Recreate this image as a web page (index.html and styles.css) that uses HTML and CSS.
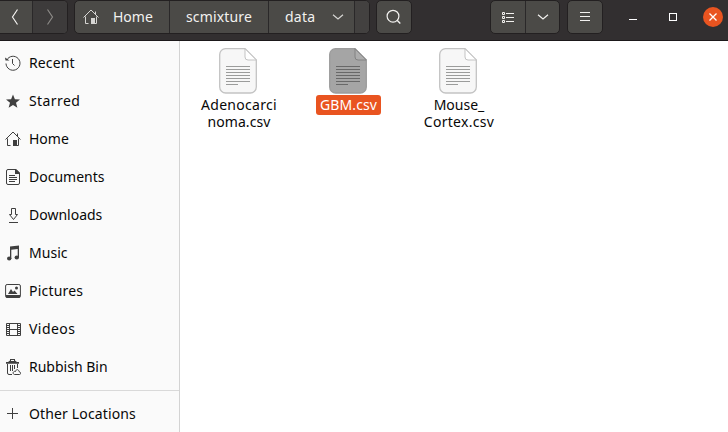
FILE: index.html
```
<!DOCTYPE html>
<html lang="en">
<head>
<meta charset="utf-8">
<title>data</title>
<link rel="stylesheet" href="styles.css">
</head>
<body>
<svg class="defs" width="0" height="0">
  <symbol id="house" viewBox="0 0 16 16">
    <path d="M.5 8.500 8 1l7.500 7.500M2.500 7.500v7h3M13.500 7.500v7h-2M12.500 5V2.500" fill="none" stroke="currentColor"/>
    <path d="M8 9h4v6H8z" fill="currentColor"/>
  </symbol>
  <symbol id="chevron" viewBox="0 0 12 6"><path d="M1 .7 6 5l5-4.300" fill="none" stroke="currentColor" stroke-width="1.200"/></symbol>
  <symbol id="paper" viewBox="0 0 38 46">
    <path class="sheet" d="M6.500.7H26L37.300 12v27a6 6 0 0 1-6 6H6.700a6 6 0 0 1-6-6V6.500a5.800 5.800 0 0 1 5.800-5.800z"/>
    <path class="fold" d="M26 .7V9a3 3 0 0 0 3 3h8.300z"/>
    <path class="lines" d="M7 18.500h24M7 21.500h24M7 24.500h24M7 27.500h24M7 30.500h24M7 33.500h24M7 36.500h12"/>
  </symbol>
</svg>
<header class="bar">
  <div class="group nav">
    <button class="btn back"><svg width="8" height="18" viewBox="0 0 8 18"><path d="M6.500 1.500 1.500 9l5 7.500" fill="none" stroke="currentColor" stroke-width="1.200"/></svg></button>
    <button class="btn forward"><svg width="8" height="18" viewBox="0 0 8 18"><path d="m1.500 1.500 5 7.500-5 7.500" fill="none" stroke="currentColor" stroke-width="1.200"/></svg></button>
  </div>
  <div class="group path">
    <button class="btn crumb home"><svg width="16" height="16"><use href="#house"/></svg><span>Home</span></button>
    <button class="btn crumb mid"><span class="scm">scmixture</span></button>
    <button class="btn crumb data"><span>data</span><svg width="12" height="6"><use href="#chevron"/></svg></button>
    <span class="rest"></span>
  </div>
  <div class="group search"><button class="btn"><svg width="16" height="16" viewBox="0 0 16 16"><circle cx="7" cy="7.200" r="5.900" fill="none" stroke="currentColor" stroke-width="1.200"/><path d="m11.100 11.300 3.200 3.200" stroke="currentColor" stroke-width="1.400"/></svg></button></div>
  <div class="group view">
    <button class="btn"><svg width="12" height="12" viewBox="0 0 12 12" fill="none" stroke="currentColor"><path d="M.5.5h2v2h-2zM.5 4.500h2v2h-2zM.5 8.500h2v2h-2zM4 1.500h8M4 5.500h8M4 9.500h8"/></svg></button>
    <button class="btn"><svg width="12" height="6"><use href="#chevron"/></svg></button>
  </div>
  <div class="group menu"><button class="btn"><svg width="10" height="10" viewBox="0 0 10 10"><path d="M0 .5h10M0 4.500h10M0 8.500h10" stroke="currentColor"/></svg></button></div>
  <div class="controls">
    <span class="min"></span><span class="max"></span>
    <span class="close"><svg width="8" height="8" viewBox="0 0 8 8"><path d="m.5.5 7 7m0-7-7 7" stroke="#fff" stroke-width="1.300"/></svg></span>
  </div>
</header>
<div class="body">
  <nav class="side">
    <a class="row"><svg width="16" height="16" viewBox="0 0 16 16" fill="none" stroke="currentColor"><path d="M1.800 5A7 7 0 1 1 1 8.500M7.500 4v4.500l2 2"/><path d="M0 2.500 4.500 5.500H.5z" fill="currentColor" stroke="none"/></svg><span class="w-recent">Recent</span></a>
    <a class="row"><svg width="16" height="16" viewBox="0 0 16 16"><path d="m8 1.500 1.900 4.800 5.100.3-4 3.200 1.400 5L8 12l-4.400 2.800 1.400-5-4-3.200 5.100-.3z" fill="currentColor"/></svg><span class="w-starred">Starred</span></a>
    <a class="row"><svg width="16" height="16"><use href="#house"/></svg><span class="w-home">Home</span></a>
    <a class="row"><svg width="16" height="16" viewBox="0 0 16 16" fill="none" stroke="currentColor"><path d="M3 .5h8l3.500 3.500v10a1.500 1.500 0 0 1-1.500 1.500H3A1.500 1.500 0 0 1 1.500 14V2A1.500 1.500 0 0 1 3 .5zM4 6.500h6M4 8.500h8M4 10.500h8M4 12.500h6"/><path d="M10 0h1l4 4v1h-5z" fill="currentColor" stroke="none"/></svg><span class="w-documents">Documents</span></a>
    <a class="row"><svg width="16" height="16" viewBox="0 0 16 16" fill="none" stroke="currentColor"><path d="M6.500 1.500h4v6h2L8.500 12.500l-4-5h2zM4 15.500h9"/></svg><span class="w-downloads">Downloads</span></a>
    <a class="row"><svg width="16" height="16" viewBox="0 0 16 16" fill="currentColor"><path d="M5 1.500 14 .5v12h-1.300V4L6.300 4.700V14H5z"/><ellipse cx="4.200" cy="13.500" rx="2.200" ry="1.900"/><ellipse cx="11.800" cy="12.500" rx="2.200" ry="1.900"/></svg><span class="w-music">Music</span></a>
    <a class="row"><svg width="16" height="16" viewBox="0 0 16 16"><rect x=".6" y="1.500" width="14.800" height="12.500" rx="1.500" fill="none" stroke="currentColor"/><path d="M3 11 6 6l2 3 1.500-1.500L12.500 11zM.5 12h15v2l-1 1h-13l-1-1z" fill="currentColor"/><circle cx="11.500" cy="5" r="1.500" fill="currentColor"/></svg><span class="w-pictures">Pictures</span></a>
    <a class="row"><svg width="16" height="16" viewBox="0 0 16 16" fill="none" stroke="currentColor"><path d="M1.500 2.500h14v12h-14zM4.500 2.500v12M12.500 2.500v12M4.500 8.500h8"/><path d="M3 2v13M14 2v13" stroke-width="2" stroke-dasharray="1 1"/></svg><span class="w-videos">Videos</span></a>
    <a class="row"><svg width="16" height="16" viewBox="0 0 16 16" fill="none" stroke="currentColor"><path d="M2.500 5v9a1.500 1.500 0 0 0 1.500 1.500h3M5.500 6v6M7.500 6v6M9.500 6v4M12.500 5v4"/><path d="M1 4.800V3h2l2-1.500V0h5v1.500L12 3h2v1.800z" fill="currentColor" stroke="none"/><path d="M6 1.500h3" stroke="#fafafa"/><path d="M9.500 15.500c-3-1-.5-4 1-3 .5-2.500 3-2.500 3.500 0 2 .5 2 3 .5 3z"/></svg><span class="w-bin">Rubbish Bin</span></a>
    <hr>
    <a class="row other"><svg width="16" height="16" viewBox="0 0 16 16"><path d="M2 7.500h11M7.500 2v11" stroke="currentColor"/></svg><span class="w-other">Other Locations</span></a>
  </nav>
  <main class="files">
    <div class="file"><svg class="icon" width="38" height="46"><use href="#paper"/></svg><div class="name"><span class="w-adeno">Adenocarci</span><span class="w-noma">noma.csv</span></div></div>
    <div class="file selected"><svg class="icon" width="38" height="46"><use href="#paper"/></svg><div class="name"><span class="w-gbm">GBM.csv</span></div></div>
    <div class="file"><svg class="icon" width="38" height="46"><use href="#paper"/></svg><div class="name"><span class="w-mouse">Mouse_</span><span class="w-cortex">Cortex.csv</span></div></div>
  </main>
</div>
</body>
</html>
```
FILE: styles.css
```
* { box-sizing: border-box; }
body { margin: 0; width: 728px; height: 432px; overflow: hidden; background: #fff; color: #080808; font: 14px/17px "Noto Sans", "Open Sans", sans-serif; }
.defs { position: absolute; }
svg { display: block; flex: none; }
.bar { display: flex; align-items: flex-start; height: 41px; background: #322f30; border-bottom: 1px solid #1b181a; color: #f2f1ef; }
.group { display: flex; height: 34px; border: 1px solid #232021; border-radius: 5px; background: #4b4a47; overflow: hidden; flex: none; }
.btn { display: flex; align-items: center; justify-content: center; width: 34px; padding: 0; border: 0; background: none; color: inherit; font: inherit; flex: none; }
.btn + .btn { border-left: 1px solid #2a2829; }
.btn span { margin-top: -2px; }
.nav { width: 68px; border-left: 0; border-radius: 0 5px 5px 0; }
.nav .back { width: 32px; padding-right: 3px; }
.nav .forward { width: 35px; background: #3d3b3b; color: #8b8986; }
.path { width: 296px; margin-left: 6px; }
.crumb.home { width: 94px; justify-content: flex-start; padding-left: 8px; gap: 14px; }
.home svg { color: #d6d5d3; }
.crumb.mid { width: 99px; }
.scm { letter-spacing: .17px; }
.crumb.data { width: 86px; justify-content: flex-start; padding-left: 16px; gap: 17px; }
.crumb.data span { letter-spacing: .25px; }
.data svg { color: #d6d5d3; }
.rest { flex: 1; border-left: 1px solid #2a2829; background: #434140; }
.search { width: 36px; margin-left: 6px; }
.view { width: 70px; margin-left: 78px; }
.view .btn:first-child svg { margin-top: 1px; }
.menu { width: 36px; margin-left: 7px; }
.controls { display: flex; align-items: center; height: 34px; margin-left: 26px; }
.min { width: 8px; height: 1px; margin-top: 5px; background: #fff; }
.max { width: 8px; height: 8px; margin-left: 32px; border: 1px solid #fff; }
.close { display: flex; align-items: center; justify-content: center; width: 20px; height: 20px; margin-left: 26px; border-radius: 50%; background: #e95420; }
.body { display: flex; height: 391px; }
.side { width: 180px; padding-top: 3px; background: #fafafa; border-right: 1px solid #d3d3d3; flex: none; }
.row { display: flex; align-items: center; height: 38px; padding-left: 5px; gap: 8px; color: #3f3f3f; }
.row span { margin-top: -2px; color: #080808; white-space: nowrap; }
.row .w-recent { letter-spacing: .12px; }
.row .w-starred { letter-spacing: .4px; }
.row .w-music { letter-spacing: .05px; }
.row .w-pictures { letter-spacing: .2px; }
.row .w-videos { letter-spacing: .45px; }
.row .w-other { letter-spacing: .14px; }
hr { height: 1px; margin: 4px 0; border: 0; background: #d9d9d9; }
.files { display: flex; padding: 7px 0 0 3px; }
.file { display: flex; flex-direction: column; align-items: center; width: 110px; }
.icon { --sheet: #f7f7f7; --edge: #c3c3c3; --fold: #fff; --crease: #c3c3c3; --ink: #9b9c9b; }
.selected .icon { --sheet: #a5a5a5; --edge: #9c9c9c; --fold: #adadad; --crease: #828282; --ink: #686868; }
.sheet { fill: var(--sheet); stroke: var(--edge); stroke-width: 1.3px; }
.fold { fill: var(--fold); stroke: var(--crease); }
.lines { fill: none; stroke: var(--ink); }
.name { margin-top: 1px; padding: 1px 4px 2px; border-radius: 3px; text-align: center; white-space: nowrap; }
.name span { display: block; }
.file:not(.selected) .name { padding-left: 5px; padding-right: 3px; }
.w-adeno { letter-spacing: .3px; }
.w-noma { letter-spacing: .1px; }
.w-gbm { letter-spacing: .1px; }
.w-cortex { letter-spacing: .3px; }
.selected .name { width: 65px; margin-left: 1px; padding-left: 3px; padding-right: 3px; background: #e95420; color: #fff; }
```
